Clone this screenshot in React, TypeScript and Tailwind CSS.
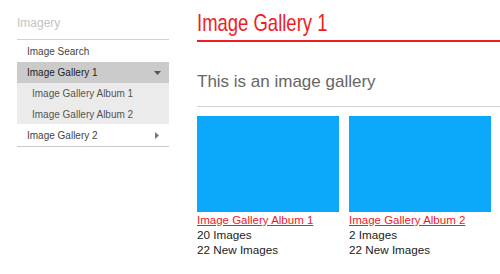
import React from "react";

const sans = { fontFamily: '"Liberation Sans", Arial, sans-serif' };

function Card({ title, count }: { title: string; count: string }) {
  return (
    <div className="w-[142px] shrink-0 flex flex-col">
      <div className="h-[96px] w-[142px] bg-[#0ba8fc]" />
      <a href="#" className="mt-[1px] text-[11.5px] leading-[14px] text-[#e8212a] underline whitespace-nowrap">{title}</a>
      <div className="text-[11.7px] leading-[15px] text-[#222] whitespace-nowrap">{count}</div>
      <div className="text-[11.7px] leading-[15px] text-[#222] whitespace-nowrap">22 New Images</div>
    </div>
  );
}

export default function App() {
  return (
    <div className="w-[500px] h-[274px] bg-white overflow-hidden flex pl-[17px]" style={sans}>
      <aside className="w-[152px] shrink-0">
        <div className="pt-[15px] h-[39px] text-[12px] leading-[16px] text-[#c3c3c3]">Imagery</div>
        <div className="border-t border-[#d0d0d0]" />
        <div className="h-[22px] flex items-center pl-[10px] text-[10px] text-[#444]">Image Search</div>
        <div className="h-[21px] flex items-center justify-between pl-[10px] pr-[8px] bg-[#cbcbcb] text-[10px] text-[#222]">
          <span>Image Gallery 1</span>
          <svg width="7" height="4" viewBox="0 0 7 4"><path d="M0 0h7L3.5 4z" fill="#555" /></svg>
        </div>
        <div className="bg-[#ebebeb]">
          <div className="h-[21px] flex items-center pl-[15px] text-[10px] text-[#555]">Image Gallery Album 1</div>
          <div className="h-[20px] flex items-center pl-[15px] text-[10px] text-[#555]">Image Gallery Album 2</div>
        </div>
        <div className="h-[22px] flex items-center justify-between pl-[10px] pr-[10px] text-[10px] text-[#444]">
          <span>Image Gallery 2</span>
          <svg width="4" height="7" viewBox="0 0 4 7"><path d="M0 0v7l4-3.5z" fill="#777" /></svg>
        </div>
        <div className="border-t border-[#c8c8c8]" />
      </aside>
      <main className="ml-[28px] flex-1 min-w-0">
        <div className="pt-[10px] h-[40px] whitespace-nowrap">
          <h1 className="inline-block origin-left scale-x-[0.77] text-[24px] leading-[26px] text-[#ee1d25]">
            Image Gallery 1
          </h1>
        </div>
        <div className="h-[2px] bg-[#ee1d25]" />
        <div className="pt-[30px] h-[64px] text-[17px] leading-[20px] text-[#666] whitespace-nowrap">This is an image gallery</div>
        <div className="h-px bg-[#d3d3d3]" />
        <div className="mt-[9px] flex gap-[10px]">
          <Card title="Image Gallery Album 1" count="20 Images" />
          <Card title="Image Gallery Album 2" count="2 Images" />
        </div>
      </main>
    </div>
  );
}
